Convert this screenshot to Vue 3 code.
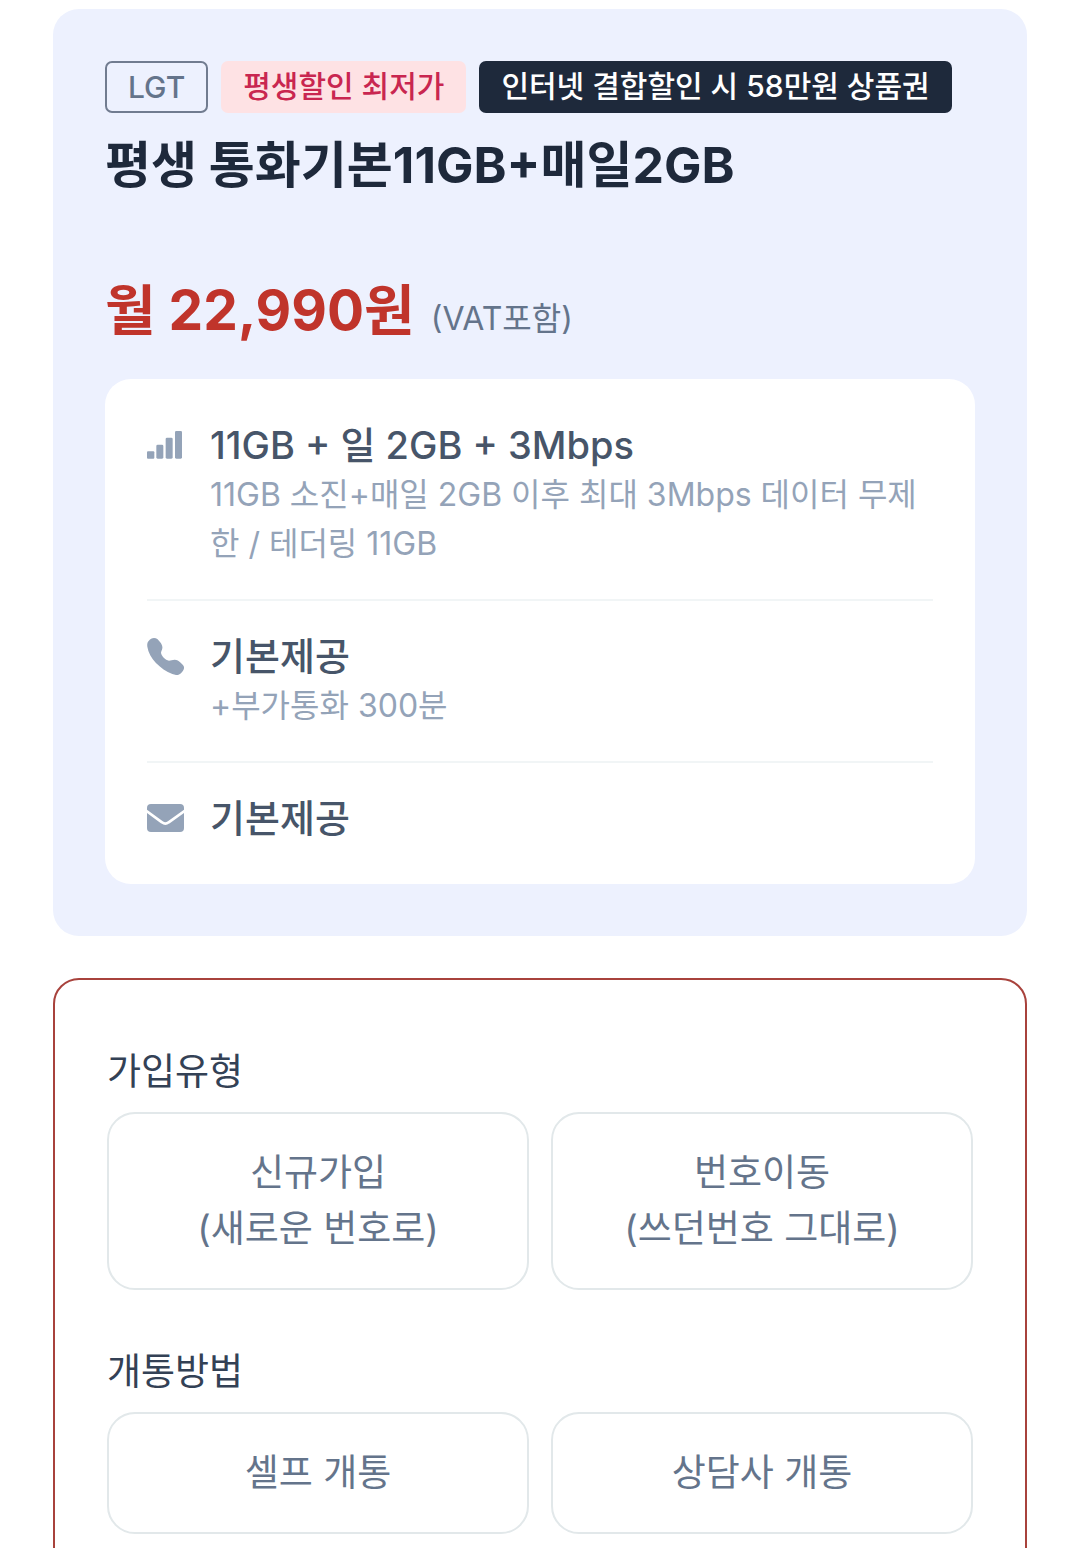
<template>
  <main class="page">
    <section class="plan-card">
      <div class="tags">
        <span class="tag tag-outline">LGT</span>
        <span class="tag tag-pink">평생할인 최저가</span>
        <span class="tag tag-dark">인터넷 결합할인 시 58만원 상품권</span>
      </div>
      <h1 class="plan-name">평생 통화기본11GB+매일2GB</h1>
      <p class="price">
        <strong>월 22,990원</strong>
        <span class="vat">(VAT포함)</span>
      </p>

      <ul class="benefits">
        <li v-for="benefit in benefits" :key="benefit.icon" class="benefit">
          <span class="icon">
            <svg v-if="benefit.icon === 'data'" viewBox="0 0 111 84" aria-hidden="true">
              <rect x="0" y="61" width="22" height="22" rx="3" />
              <rect x="28" y="41" width="21" height="42" rx="4" />
              <rect x="56" y="20" width="21" height="63" rx="4" />
              <rect x="84" y="0" width="21" height="83" rx="4" />
            </svg>
            <svg v-else-if="benefit.icon === 'call'" viewBox="0 0 111 111" aria-hidden="true">
              <path d="M1 26C0 19 1 13 5 9C9 4 15 0 21 0C29 0 34 5 39 12C44 18 47 24 46 31C45 36 43 39 42 44C43 54 55 66 66 68C71 68 76 65 83 65C90 65 95 68 101 74C108 80 112 84 111 91C110 99 101 109 93 111C88 112 82 110 76 108C40 94 6 60 1 26Z" />
            </svg>
            <svg v-else viewBox="0 0 111 84" aria-hidden="true">
              <rect width="111" height="84" rx="12" />
              <path class="fold" d="M-3 20L45 55Q55 63 65 55L114 20" />
            </svg>
          </span>
          <div class="benefit-text">
            <p class="benefit-title">{{ benefit.title }}</p>
            <p v-if="benefit.desc" class="benefit-desc">{{ benefit.desc }}</p>
          </div>
        </li>
      </ul>
    </section>

    <section class="join-form">
      <div v-for="group in groups" :key="group.id" class="group">
        <h2 :id="group.id" class="group-label">{{ group.label }}</h2>
        <div class="options" role="group" :aria-labelledby="group.id">
          <button
            v-for="option in group.options"
            :key="option[0]"
            type="button"
            class="option"
            :class="{ selected: selected[group.id] === option[0] }"
            @click="selected[group.id] = option[0]"
          >
            <span v-for="line in option" :key="line">{{ line }}</span>
          </button>
        </div>
      </div>
    </section>
  </main>
</template>

<script setup>
import { reactive } from 'vue';

const benefits = [
  {
    icon: 'data',
    title: '11GB + 일 2GB + 3Mbps',
    desc: '11GB 소진+매일 2GB 이후 최대 3Mbps 데이터 무제한 / 테더링 11GB',
  },
  { icon: 'call', title: '기본제공', desc: '+부가통화 300분' },
  { icon: 'message', title: '기본제공' },
];

const groups = [
  {
    id: 'join-type',
    label: '가입유형',
    options: [
      ['신규가입', '(새로운 번호로)'],
      ['번호이동', '(쓰던번호 그대로)'],
    ],
  },
  {
    id: 'open-method',
    label: '개통방법',
    options: [['셀프 개통'], ['상담사 개통']],
  },
];

const selected = reactive({});
</script>

<style>
html {
  background: #fff;
  scrollbar-width: none;
}
</style>

<style scoped>
.page {
  box-sizing: border-box;
  padding: 9px 53px 42px;
  font-family: Inter, "Noto Sans CJK KR", sans-serif;
  color: #1e293b;
}

h1,
h2,
p,
ul {
  margin: 0;
  padding: 0;
}

.plan-card {
  padding: 52px;
  border-radius: 26px;
  background: #edf1fe;
}

.tags {
  display: flex;
  flex-wrap: wrap;
  gap: 13px;
}

.tag {
  box-sizing: border-box;
  height: 52px;
  padding: 0 22px;
  border-radius: 7px;
  font-size: 30px;
  font-weight: 500;
  line-height: 50px;
}

.tag-outline {
  padding: 0 21px;
  border: 2px solid #717c90;
  color: #64748b;
  line-height: 48px;
}

.tag-pink {
  background: #fee2e4;
  color: #c92650;
}

.tag-dark {
  background: #1e293b;
  color: #fff;
}

.plan-name {
  margin-top: 18px;
  font-size: 50px;
  font-weight: 700;
  line-height: 68px;
}

.price {
  display: flex;
  align-items: baseline;
  gap: 16px;
  margin-top: 71px;
  color: #c0342b;
  line-height: 80px;
}

.price strong {
  font-size: 55px;
  font-weight: 700;
}

.vat {
  color: #64748b;
  font-size: 32px;
}

.benefits {
  margin-top: 20px;
  padding: 41px 42px;
  border-radius: 26px;
  background: #fff;
  list-style: none;
}

.benefit {
  display: flex;
  gap: 26px;
}

.benefit + .benefit {
  margin-top: 31px;
  padding-top: 30px;
  border-top: 2px solid #f1f5f6;
}

.icon {
  display: flex;
  flex: none;
  align-items: center;
  width: 37px;
  height: 50px;
}

.icon svg {
  width: 100%;
  fill: #94a3b8;
}

.icon .fold {
  fill: none;
  stroke: #fff;
  stroke-width: 8;
}

.benefit-title {
  color: #475569;
  font-size: 38px;
  font-weight: 500;
  line-height: 50px;
}

.benefit-desc {
  color: #94a3b8;
  font-size: 32px;
  line-height: 49px;
}

.join-form {
  margin-top: 42px;
  padding: 64px 52px 52px;
  border: 2px solid #a8423c;
  border-radius: 26px;
}

.group + .group {
  margin-top: 54px;
}

.group-label {
  margin-bottom: 13px;
  color: #334155;
  font-size: 37px;
  font-weight: 400;
  line-height: 55px;
}

.options {
  display: grid;
  grid-template-columns: 1fr 1fr;
  gap: 22px;
}

.option {
  display: flex;
  flex-direction: column;
  align-items: center;
  padding: 31px 20px;
  border: 2px solid #e2e8ea;
  border-radius: 28px;
  background: #fff;
  color: #64748b;
  font: inherit;
  font-size: 37px;
  line-height: 56px;
  cursor: pointer;
}

.option.selected {
  border-color: #c0342b;
  color: #c0342b;
}
</style>
